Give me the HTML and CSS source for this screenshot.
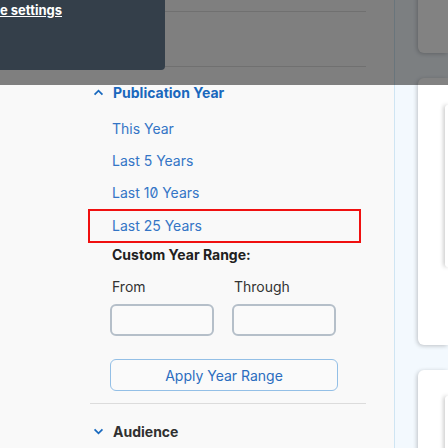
FILE: index.html
```html
<!DOCTYPE html>
<html>
<head>
<meta charset="utf-8">
<link rel="stylesheet" href="styles.css">
</head>
<body>
<div class="page">
  <aside class="sidebar">
    <section class="facet facet-first"></section>
    <section class="facet facet-prev">
      <div class="facet-head"><span class="facet-title dark">Format</span></div>
    </section>
    <section class="facet">
      <div class="facet-head open">
        <svg class="chev-svg" viewBox="0 0 12 8" width="11" height="7"><path d="M1.5 6.5 L6 2 L10.5 6.5" fill="none" stroke="#1a6abf" stroke-width="2"/></svg>
        <span class="facet-title blue">Publication Year</span>
      </div>
      <ul class="opts">
        <li class="opt">This Year</li>
        <li class="opt">Last 5 Years</li>
        <li class="opt">Last 10 Years</li>
        <li class="opt focus">Last 25 Years</li>
      </ul>
      <div class="custom">
        <div class="custom-title">Custom Year Range:</div>
        <div class="range">
          <label class="field"><span class="field-label">From</span><input class="field-input" type="text"></label>
          <label class="field"><span class="field-label">Through</span><input class="field-input" type="text"></label>
        </div>
        <button class="apply">Apply Year Range</button>
      </div>
    </section>
    <section class="facet facet-last">
      <div class="facet-head">
        <svg class="chev-svg" viewBox="0 0 12 8" width="11" height="7"><path d="M1.5 1.5 L6 6 L10.5 1.5" fill="none" stroke="#1a6abf" stroke-width="2"/></svg>
        <span class="facet-title dark">Audience</span>
      </div>
    </section>
  </aside>
  <div class="gutter">
    <div class="card card-top"></div>
    <div class="card card-mid"><div class="inner inner-a"></div></div>
    <div class="card card-low"><div class="inner inner-b"></div></div>
  </div>
  <div class="backdrop"></div>
  <div class="tip"><a class="tip-link">e settings</a></div>
</div>
</body>
</html>
```

FILE: styles.css
```css
* { box-sizing: border-box; }
html, body { margin: 0; padding: 0; }
body {
  width: 448px;
  height: 448px;
  overflow: hidden;
  background: #f9f9f9;
  font-family: Inter, "Noto Sans", sans-serif;
  font-size: 14px;
  font-feature-settings: "zero" 1;
}
.page {
  position: relative;
  display: flex;
  height: 448px;
}
.sidebar {
  width: 395px;
  flex: none;
  background: #f9f9f9;
  border-right: 1px solid #cfe5f3;
  padding-left: 90px;
  padding-right: 28px;
}
.facet { border-bottom: 1px solid #dcdcdc; }
.facet-first { margin-top: -45px; height: 57px; }
.facet-prev { height: 55px; padding-top: 12px; }
.facet-prev .facet-head { padding-left: 23px; }
.facet-head {
  display: flex;
  align-items: center;
  height: 26px;
  padding-left: 3px;
}
.facet-head.open { margin-top: 19px; height: 13px; }
.chev-svg { flex: none; margin-right: 9px; }
.facet-title { font-weight: 700; font-size: 14px; }
.facet-title.blue { color: #1a68bd; }
.facet-title.dark { color: #303030; }
.opts {
  list-style: none;
  margin: 0;
  padding: 14px 0 0 0;
  width: 269px;
}
.opt {
  height: 32px;
  line-height: 32px;
  padding-left: 22px;
  color: #3475c6;
}
.opt.focus {
  margin-top: 2px;
  height: 30px;
  line-height: 30px;
  outline: 2px solid #f01010;
}
.custom { padding: 4px 0 12px 22px; }
.custom-title {
  font-weight: 700;
  color: #202020;
  height: 20px;
  line-height: 20px;
}
.range {
  display: flex;
  gap: 20px;
  margin-top: 12px;
}
.field { display: flex; flex-direction: column; }
.field-label { color: #333; height: 20px; line-height: 20px; }
.field-input {
  margin-top: 7px;
  width: 104px;
  height: 32px;
  border: 2px solid #b5bfc9;
  border-radius: 6px;
  background: #fafafa;
  margin-left: -2px;
}
.apply {
  display: block;
  margin: 23px 0 0 -2px;
  width: 228px;
  height: 32px;
  border: 1px solid #93bfe6;
  border-radius: 6px;
  background: #fafafa;
  color: #2b6dbf;
  font-family: inherit;
  font-size: 14px;
}
.facet-last { border-bottom: none; padding-top: 14px; }
.gutter {
  flex: 1;
  background: #f3f9fe;
  padding-left: 23px;
  display: flex;
  flex-direction: column;
  gap: 25px;
}
.card {
  background: #fff;
  border-radius: 6px 0 0 6px;
  box-shadow: -1px 1px 4px rgba(0,0,0,0.22);
  flex: none;
  position: relative;
  overflow: hidden;
}
.card-top { margin-top: -40px; height: 93px; }
.card-mid { height: 267px; }
.card-low { height: 120px; }
.inner {
  margin-left: 27px;
  background: #fff;
  border-radius: 5px 0 0 5px;
  box-shadow: -1px 0 4px rgba(0,0,0,0.3);
}
.inner-a { margin-top: 27px; height: 162px; }
.inner-b { margin-top: 26px; height: 120px; }
.backdrop {
  position: absolute;
  left: 0; top: 0;
  width: 448px;
  height: 85px;
  background: rgba(0,0,0,0.49);
}
.tip {
  position: absolute;
  left: 0; top: 0;
  width: 165px;
  height: 70px;
  background: #343f4a;
  border-bottom-right-radius: 4px;
  padding-top: 1px;
}
.tip-link {
  color: #fff;
  font-weight: 700;
  font-size: 13px;
  text-decoration: underline;
  line-height: 17px;
}
```
